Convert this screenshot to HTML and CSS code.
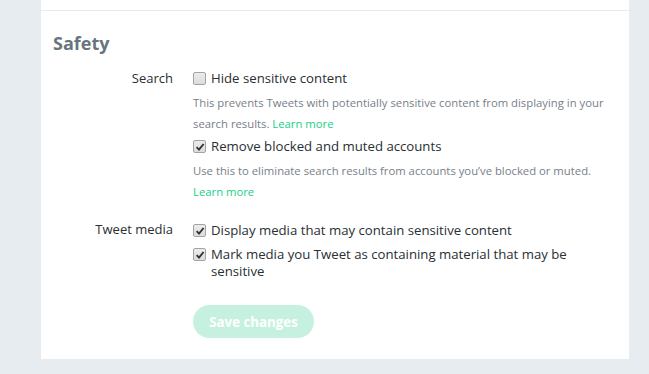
FILE: index.html
```html
<!DOCTYPE html>
<html>
<head>
<meta charset="utf-8">
<link rel="stylesheet" href="styles.css">
</head>
<body>
<div class="panel">
  <div class="top-space"></div>
  <section class="section">
    <h2 class="heading">Safety</h2>
    <div class="row">
      <div class="label">Search</div>
      <div class="controls">
        <label class="check"><span class="box"></span><span class="check-text">Hide sensitive content</span></label>
        <p class="desc">This prevents Tweets with potentially sensitive content from displaying in your search results. <a class="link">Learn more</a></p>
        <label class="check"><span class="box checked"><svg viewBox="0 0 10 10" width="10" height="10"><path d="M1.6 5.2 L4 7.6 L8.6 2" fill="none" stroke="#333" stroke-width="1.9"/></svg></span><span class="check-text">Remove blocked and muted accounts</span></label>
        <p class="desc">Use this to eliminate search results from accounts you’ve blocked or muted. <a class="link">Learn more</a></p>
      </div>
    </div>
    <div class="row row-media">
      <div class="label">Tweet media</div>
      <div class="controls">
        <label class="check"><span class="box checked"><svg viewBox="0 0 10 10" width="10" height="10"><path d="M1.6 5.2 L4 7.6 L8.6 2" fill="none" stroke="#333" stroke-width="1.9"/></svg></span><span class="check-text">Display media that may contain sensitive content</span></label>
        <label class="check"><span class="box checked"><svg viewBox="0 0 10 10" width="10" height="10"><path d="M1.6 5.2 L4 7.6 L8.6 2" fill="none" stroke="#333" stroke-width="1.9"/></svg></span><span class="check-text">Mark media you Tweet as containing material that may be sensitive</span></label>
      </div>
    </div>
    <div class="row row-actions">
      <div class="label"></div>
      <div class="controls">
        <button class="btn" disabled>Save changes</button>
      </div>
    </div>
  </section>
</div>
</body>
</html>
```
FILE: styles.css
```css
html, body {
  margin: 0;
  padding: 0;
  background: #e6ecf0;
  font-family: "Open Sans", "Noto Sans", sans-serif;
  color: #292f33;
}
.panel {
  margin-left: 41px;
  width: 588px;
  height: 359px;
  background: #fff;
}
.top-space {
  height: 10px;
}
.section {
  border-top: 1px solid #e6ecf0;
  padding: 0 12px;
}
.heading {
  margin: 0;
  padding-top: 20px;
  height: 48px;
  box-sizing: border-box;
  font-size: 18px;
  font-weight: 700;
  color: #66757f;
  line-height: 24px;
}
.row {
  display: flex;
}
.label {
  flex: none;
  width: 140px;
  text-align: right;
  font-size: 13px;
  line-height: 20px;
  padding-top: 9px;
  padding-right: 20px;
  box-sizing: border-box;
}
.controls {
  flex: 1;
  padding-top: 11px;
  padding-right: 12px;
}
.check {
  display: flex;
  align-items: flex-start;
  font-size: 13.2px;
  line-height: 17px;
  margin-bottom: 5px;
}
.row-media .check {
  margin-bottom: 7px;
}
.box {
  flex: none;
  width: 11px;
  height: 11px;
  border: 1px solid #a4a4a4;
  border-radius: 2px;
  background: linear-gradient(#ececec, #dcdcdc);
  margin: 2px 5px 0 0;
  display: flex;
  align-items: center;
  justify-content: center;
}
.box svg {
  display: block;
}
.desc {
  margin: 0 0 4px;
  font-size: 11.3px;
  line-height: 21px;
  color: #778089;
}
.link {
  color: #19cf86;
  cursor: pointer;
}
.row-media {
  padding-top: 5px;
}
.row-media .label {
  padding-top: 8px;
}
.row-actions {
  padding-top: 7px;
}
.btn {
  border: none;
  background: #c6f1e0;
  color: #fff;
  font-family: inherit;
  font-size: 13.3px;
  font-weight: 700;
  border-radius: 100px;
  height: 33px;
  width: 121px;
  padding: 0;
}
```
